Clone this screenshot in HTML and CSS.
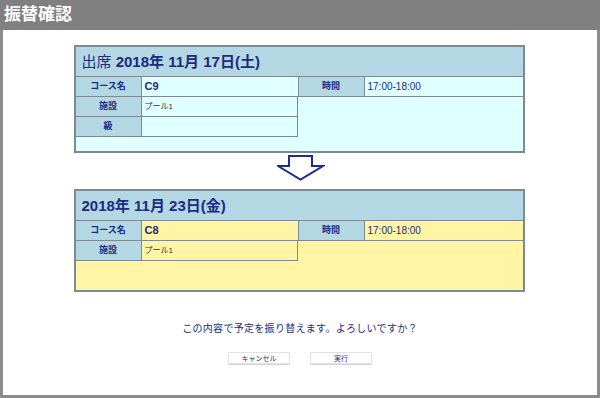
FILE: index.html
```html
<!DOCTYPE html>
<html lang="ja">
<head>
    <meta charset="UTF-8">
    <title>振替確認</title>
    <link rel="stylesheet" href="styles.css">
</head>
<body>
    <div class="page">
        <div class="titlebar">振替確認</div>

        <div class="main">
            <div class="card card-from">
                <div class="card-head">出席 <b>2018年 11月 17日(土)</b></div>
                <div class="grid">
                    <div class="lbl">コース名</div>
                    <div class="val val-course">C9</div>
                    <div class="lbl lbl-mid">時間</div>
                    <div class="val val-time">17:00-18:00</div>

                    <div class="lbl">施設</div>
                    <div class="val val-small val-end">プール1</div>
                    <div class="empty"></div>

                    <div class="lbl">級</div>
                    <div class="val val-end"></div>
                    <div class="empty"></div>
                </div>
            </div>

            <div class="arrow">
                <svg width="48" height="26" viewBox="0 0 48 26">
                    <polygon points="12,1 35,1 35,11 46,11 23.5,24.5 1,11 12,11" fill="#fff" stroke="#1c2c96" stroke-width="2" stroke-linejoin="miter"/>
                </svg>
            </div>

            <div class="card card-to">
                <div class="card-head"><b>2018年 11月 23日(金)</b></div>
                <div class="grid">
                    <div class="lbl">コース名</div>
                    <div class="val val-course">C8</div>
                    <div class="lbl lbl-mid">時間</div>
                    <div class="val val-time">17:00-18:00</div>

                    <div class="lbl">施設</div>
                    <div class="val val-small val-end">プール1</div>
                    <div class="empty"></div>
                </div>
            </div>

            <p class="confirm">この内容で予定を振り替えます。よろしいですか？</p>

            <div class="actions">
                <button class="btn">キャンセル</button>
                <button class="btn">実行</button>
            </div>
        </div>
    </div>
</body>
</html>
```

FILE: styles.css
```css
/* 振替確認 */
body {
    margin: 0;
    font-family: "Liberation Sans", "Noto Sans CJK JP", sans-serif;
    color: #1c2a80;
}

.page {
    width: 600px;
    height: 398px;
    box-sizing: border-box;
    border: 3px solid #8c8c8c;
    border-top: 0;
    background: #fff;
}

.titlebar {
    height: 30px;
    margin: 0 -3px;
    padding-left: 4px;
    background: #808080;
    color: #fff;
    font-size: 17px;
    font-weight: bold;
    line-height: 30px;
}

.main {
    padding-top: 15px;
}

.card {
    width: 447px;
    margin: 0 auto;
    border: 2px solid #7d8a93;
    position: relative;
    left: -1px;
}
.card-from {
    background: #e0ffff;
    padding-bottom: 14px;
}
.card-to {
    background: #fff5a5;
    padding-bottom: 29px;
}

.card-head {
    height: 29px;
    padding-left: 6px;
    background: #b3d7e3;
    border-bottom: 1px solid #7d8a93;
    font-size: 15px;
    line-height: 30px;
}
.card-head b {
    font-weight: bold;
}

.grid {
    display: grid;
    grid-template-columns: 66px 156px 67px 1fr;
    grid-auto-rows: 20px;
}

.lbl {
    background: #b3d7e3;
    border-right: 1px solid #7d8a93;
    border-bottom: 1px solid #7d8a93;
    font-size: 9px;
    font-weight: bold;
    text-align: center;
    line-height: 19px;
}
.lbl-mid {
    border-left: 1px solid #7d8a93;
}

.val {
    border-bottom: 1px solid #7d8a93;
    padding-left: 3px;
    font-size: 10px;
    line-height: 19px;
}
.val-course {
    font-size: 11px;
    font-weight: bold;
}
.val-time {
    font-size: 10px;
}
.val-small {
    font-size: 8px;
    color: #333;
}
.val-end {
    border-right: 1px solid #7d8a93;
}
.empty {
    grid-column: span 2;
}

.arrow {
    display: flex;
    justify-content: center;
    padding: 2px 0 8px;
    margin-left: 1px;
}
.arrow svg {
    display: block;
}

.confirm {
    margin: 29px 0 0;
    text-align: center;
    font-size: 10px;
    line-height: 16px;
    letter-spacing: 0.3px;
}

.actions {
    display: flex;
    justify-content: center;
    gap: 20px;
    margin-top: 15px;
}
.btn {
    width: 62px;
    height: 12px;
    padding: 0;
    background: #fff;
    border: 1px solid #e2e2e2;
    box-shadow: 0 1px 1px #d0d0d0;
    border-radius: 1px;
    font-family: "Noto Sans CJK JP", sans-serif;
    font-size: 7px;
    line-height: 10px;
    color: #1c2a80;
}
```
